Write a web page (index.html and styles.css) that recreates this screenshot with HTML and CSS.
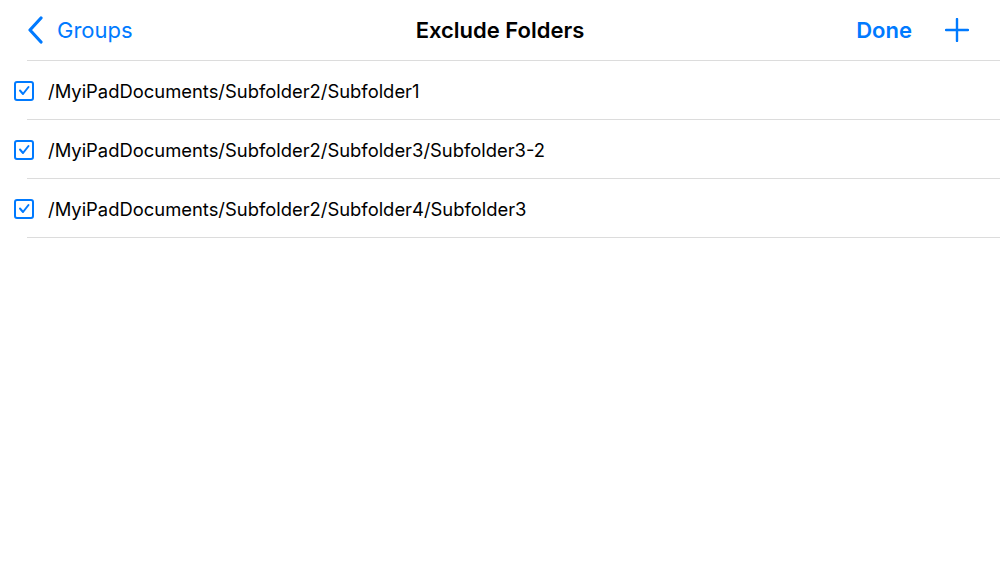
FILE: index.html
```html
<!DOCTYPE html>
<html lang="en">
<head>
    <meta charset="UTF-8">
    <meta name="viewport" content="width=device-width, initial-scale=1.0">
    <title>Exclude Folders</title>
    <link rel="stylesheet" href="styles.css">
</head>
<body>
    <div class="nav-bar">
        <a class="back-link" href="#">
            <svg class="chevron" width="18" height="28" viewBox="0 0 18 28">
                <path d="M14 2 L3 14 L14 26" fill="none" stroke="#007aff" stroke-width="3.2" stroke-linecap="round" stroke-linejoin="round"/>
            </svg>
            <span>Groups</span>
        </a>
        <h1 class="nav-title">Exclude Folders</h1>
        <div class="nav-actions">
            <a class="done-link" href="#">Done</a>
            <svg class="plus" width="24" height="24" viewBox="0 0 24 24">
                <path d="M12 1 V23 M1 12 H23" fill="none" stroke="#007aff" stroke-width="2.4" stroke-linecap="round"/>
            </svg>
        </div>
    </div>

    <ul class="folder-list">
        <li class="folder-row">
            <span class="checkbox">
                <svg width="16" height="16" viewBox="0 0 16 16"><path d="M4 7.5 L7 11 L12.5 4" fill="none" stroke="#007aff" stroke-width="2" stroke-linecap="round" stroke-linejoin="round"/></svg>
            </span>
            <span class="folder-path">/MyiPadDocuments/Subfolder2/Subfolder1</span>
        </li>
        <li class="folder-row">
            <span class="checkbox">
                <svg width="16" height="16" viewBox="0 0 16 16"><path d="M4 7.5 L7 11 L12.5 4" fill="none" stroke="#007aff" stroke-width="2" stroke-linecap="round" stroke-linejoin="round"/></svg>
            </span>
            <span class="folder-path">/MyiPadDocuments/Subfolder2/Subfolder3/Subfolder3-2</span>
        </li>
        <li class="folder-row">
            <span class="checkbox">
                <svg width="16" height="16" viewBox="0 0 16 16"><path d="M4 7.5 L7 11 L12.5 4" fill="none" stroke="#007aff" stroke-width="2" stroke-linecap="round" stroke-linejoin="round"/></svg>
            </span>
            <span class="folder-path">/MyiPadDocuments/Subfolder2/Subfolder4/Subfolder3</span>
        </li>
    </ul>
</body>
</html>
```

FILE: styles.css
```css
body {
    font-family: Inter, "Liberation Sans", sans-serif;
    background-color: #fff;
    color: #000;
    margin: 0;
    padding: 0;
}
.nav-bar {
    height: 61px;
    margin-left: 27px;
    border-bottom: 1px solid #dcdcdc;
    display: grid;
    grid-template-columns: 1fr auto 1fr;
    align-items: center;
    box-sizing: border-box;
}
.back-link {
    display: flex;
    align-items: center;
    gap: 12px;
    color: #007aff;
    text-decoration: none;
    font-size: 22px;
}
.chevron {
    display: block;
}
.nav-title {
    margin: 0;
    font-size: 22px;
    font-weight: 600;
    margin-left: -27px; /* keep the title centred on the window */
}
.nav-actions {
    display: flex;
    align-items: center;
    justify-content: flex-end;
    gap: 33px;
    padding-right: 31px;
}
.done-link {
    color: #007aff;
    text-decoration: none;
    font-size: 22px;
    font-weight: 600;
}
.plus {
    display: block;
}
.folder-list {
    list-style-type: none;
    margin: 0;
    padding: 0;
}
.folder-row {
    height: 59px;
    display: flex;
    align-items: center;
    position: relative;
    padding-left: 14px;
    box-sizing: border-box;
}
.folder-row::after {
    content: "";
    position: absolute;
    left: 27px;
    right: 0;
    bottom: 0;
    border-bottom: 1px solid #dcdcdc;
}
.checkbox {
    width: 20px;
    height: 20px;
    border: 2px solid #007aff;
    border-radius: 3px;
    box-sizing: border-box;
    flex-shrink: 0;
    display: flex;
    align-items: center;
    justify-content: center;
}
.checkbox svg {
    display: block;
}
.folder-path {
    margin-left: 14px;
    font-size: 18.4px;
}
```
